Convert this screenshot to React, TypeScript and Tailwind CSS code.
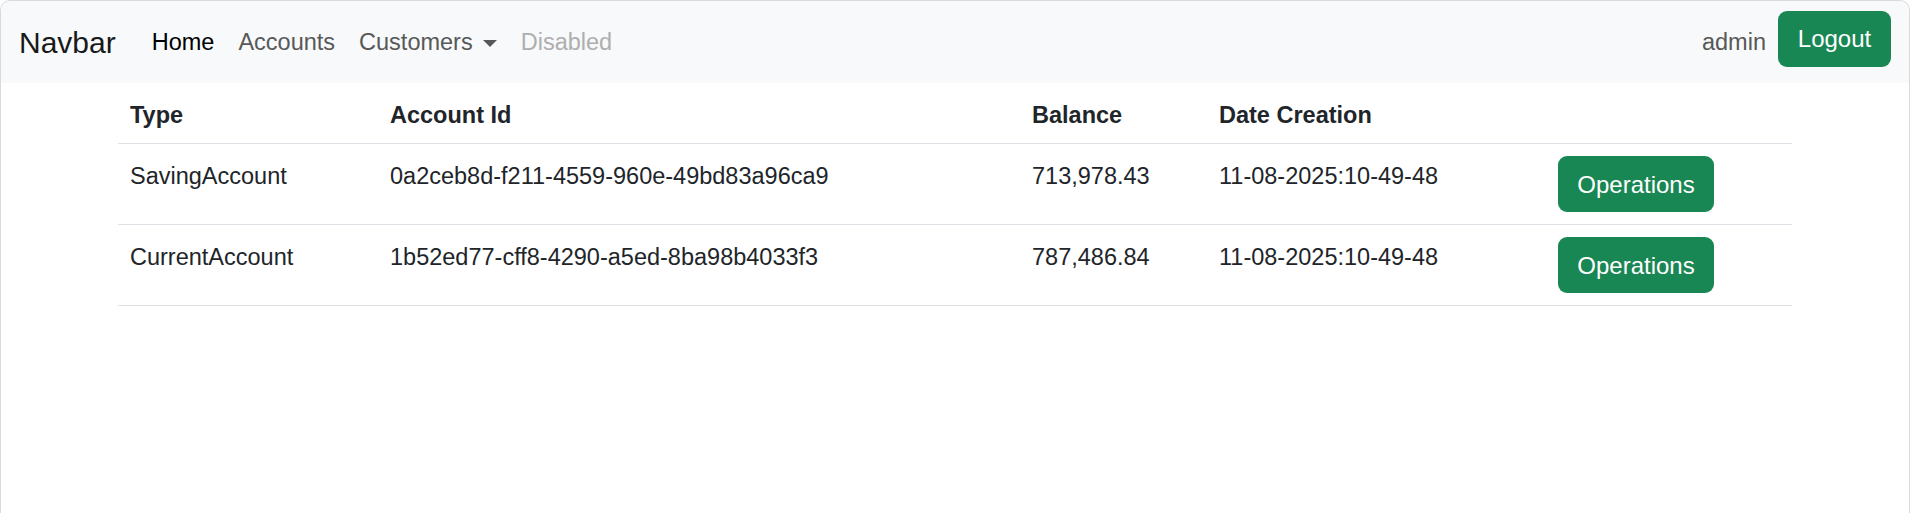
import React from 'react';

const accounts = [
  {
    type: 'SavingAccount',
    id: '0a2ceb8d-f211-4559-960e-49bd83a96ca9',
    balance: '713,978.43',
    date: '11-08-2025:10-49-48',
  },
  {
    type: 'CurrentAccount',
    id: '1b52ed77-cff8-4290-a5ed-8ba98b4033f3',
    balance: '787,486.84',
    date: '11-08-2025:10-49-48',
  },
];

function Navbar() {
  return (
    <nav className="flex h-[82px] items-center bg-[#f8f9fa] px-[18px]">
      {/* brand */}
      <a className="mr-[24px] text-[30px] leading-[45px] text-[#19191a]">Navbar</a>

      {/* links */}
      <ul className="flex items-center text-[23.5px] leading-[36px]">
        <li className="px-[12px] py-[12px] text-black">Home</li>
        <li className="px-[12px] py-[12px] text-[#575858]">Accounts</li>
        <li className="flex items-center px-[12px] py-[12px] text-[#575858]">
          Customers
          <span className="ml-[10px] mt-[2px] h-0 w-0 border-x-[7px] border-t-[7px] border-x-transparent border-t-[#575858]" />
        </li>
        <li className="px-[12px] py-[12px] text-[#aeaeaf]">Disabled</li>
      </ul>

      {/* user */}
      <div className="ml-auto flex items-center">
        <span className="mr-[12px] text-[23.5px] leading-[36px] text-[#575858]">admin</span>
        <button className="mb-[6px] h-[56px] w-[113px] rounded-[9px] bg-[#198754] text-[24px] text-white">
          Logout
        </button>
      </div>
    </nav>
  );
}

export default function App() {
  return (
    <div
      className="h-screen w-[1910px] overflow-hidden rounded-t-[10px] border-x border-t border-[#dadada] bg-white text-[#212529]"
      style={{ fontFamily: '"Liberation Sans", Arial, sans-serif' }}
    >
      <Navbar />

      {/* 계좌 테이블 */}
      <div className="mx-auto w-[1710px] px-[18px]">
        <table className="w-full table-fixed border-collapse text-[23.5px] leading-[36px]">
          <colgroup>
            <col className="w-[260px]" />
            <col className="w-[642px]" />
            <col className="w-[187px]" />
            <col className="w-[339px]" />
            <col />
          </colgroup>
          <thead>
            <tr className="border-b border-[#dee2e6] text-left">
              <th className="px-[12px] pb-[10px] pt-[14px] font-bold">Type</th>
              <th className="px-[12px] pb-[10px] pt-[14px] font-bold">Account Id</th>
              <th className="px-[12px] pb-[10px] pt-[14px] font-bold">Balance</th>
              <th className="px-[12px] pb-[10px] pt-[14px] font-bold">Date Creation</th>
              <th className="p-[12px]"></th>
            </tr>
          </thead>
          <tbody>
            {accounts.map((a) => (
              <tr key={a.id} className="border-b border-[#dee2e6] align-top">
                <td className="px-[12px] pt-[14px]">{a.type}</td>
                <td className="px-[12px] pt-[14px]">{a.id}</td>
                <td className="px-[12px] pt-[14px]">{a.balance}</td>
                <td className="px-[12px] pt-[14px]">{a.date}</td>
                <td className="p-[12px]">
                  <button className="h-[56px] w-[156px] rounded-[9px] bg-[#198754] pt-[2px] text-[24px] text-white">
                    Operations
                  </button>
                </td>
              </tr>
            ))}
          </tbody>
        </table>
      </div>
    </div>
  );
}
